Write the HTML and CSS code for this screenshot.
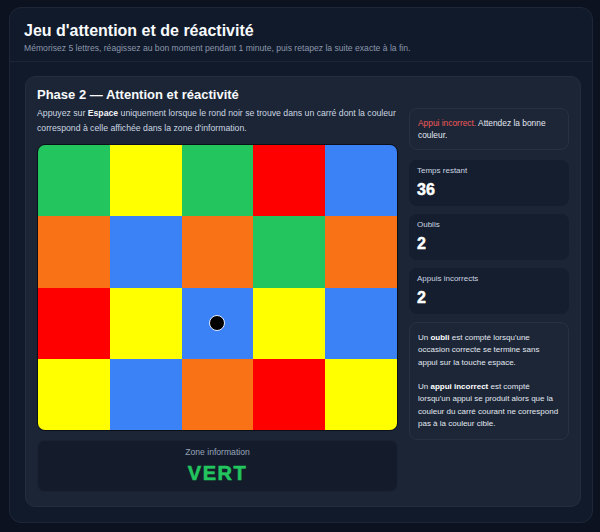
FILE: index.html
```html
<!DOCTYPE html>
<html lang="fr">
<head>
<meta charset="utf-8">
<title>Jeu d'attention et de réactivité</title>
<link rel="stylesheet" href="styles.css">
</head>
<body>
<div class="card">
  <header class="header">
    <h1 class="title">Jeu d'attention et de réactivité</h1>
    <p class="subtitle">Mémorisez 5 lettres, réagissez au bon moment pendant 1 minute, puis retapez la suite exacte à la fin.</p>
  </header>
  <main class="body">
    <section class="panel">
      <h2 class="phase">Phase 2 — Attention et réactivité</h2>
      <div class="row">
        <div class="left">
          <p class="desc">Appuyez sur <b>Espace</b> uniquement lorsque le rond noir se trouve dans un carré dont la couleur correspond à celle affichée dans la zone d'information.</p>
          <div class="grid">
            <div class="cell green"></div>
            <div class="cell yellow"></div>
            <div class="cell green"></div>
            <div class="cell red"></div>
            <div class="cell blue"></div>
            <div class="cell orange"></div>
            <div class="cell blue"></div>
            <div class="cell orange"></div>
            <div class="cell green"></div>
            <div class="cell orange"></div>
            <div class="cell red"></div>
            <div class="cell yellow"></div>
            <div class="cell blue"><span class="dot"></span></div>
            <div class="cell yellow"></div>
            <div class="cell blue"></div>
            <div class="cell yellow"></div>
            <div class="cell blue"></div>
            <div class="cell orange"></div>
            <div class="cell red"></div>
            <div class="cell yellow"></div>
          </div>
          <div class="zone">
            <div class="zone-label">Zone information</div>
            <div class="zone-value">VERT</div>
          </div>
        </div>
        <aside class="side">
          <div class="msg"><span class="err">Appui incorrect.</span> Attendez la bonne couleur.</div>
          <div class="stat">
            <div class="stat-label">Temps restant</div>
            <div class="stat-value">36</div>
          </div>
          <div class="stat">
            <div class="stat-label">Oublis</div>
            <div class="stat-value">2</div>
          </div>
          <div class="stat">
            <div class="stat-label">Appuis incorrects</div>
            <div class="stat-value">2</div>
          </div>
          <div class="info">
            <p>Un <b>oubli</b> est compté lorsqu'une occasion correcte se termine sans appui sur la touche espace.</p>
            <p>Un <b>appui incorrect</b> est compté lorsqu'un appui se produit alors que la couleur du carré courant ne correspond pas à la couleur cible.</p>
          </div>
        </aside>
      </div>
    </section>
  </main>
</div>
</body>
</html>
```

FILE: styles.css
```css
* { box-sizing: border-box; }
html, body { margin: 0; }
body {
  background: #0c1220;
  font-family: "Liberation Sans", Arial, sans-serif;
  color: #e2e8f0;
  padding: 7px 7px 9px 9px;
  height: 532px;
}
.card {
  height: 516px;
  background: #111a2b;
  border: 1px solid #1d2738;
  border-radius: 12px;
  display: flex;
  flex-direction: column;
}
.header {
  padding: 13px 14px 7px 14px;
  border-bottom: 1px solid #1b2535;
}
.title {
  margin: 0;
  font-size: 16px;
  line-height: 20px;
  font-weight: 700;
  color: #f8fafc;
}
.subtitle {
  margin: 1px 0 0;
  font-size: 8.6px;
  line-height: 12px;
  color: #8b97aa;
}
.body {
  flex: 1;
  padding: 14px 12px 15px 15px;
  display: flex;
}
.panel {
  flex: 1;
  background: #1b2535;
  border: 1px solid #222d3e;
  border-radius: 10px;
  padding: 10px 11px 12px 11px;
}
.phase {
  margin: 0;
  font-size: 13px;
  line-height: 16px;
  font-weight: 700;
  color: #f8fafc;
}
.row {
  margin-top: 3px;
  display: flex;
  gap: 11px;
}
.left {
  width: 361px;
  display: flex;
  flex-direction: column;
}
.desc {
  margin: 0;
  font-size: 8.7px;
  line-height: 15px;
  color: #cbd5e1;
}
.desc b { color: #f1f5f9; }
.grid {
  margin-top: 8px;
  width: 361px;
  display: grid;
  grid-template-columns: repeat(5, 1fr);
  grid-template-rows: repeat(4, 71.25px);
  border-radius: 8px;
  overflow: hidden;
  border: 1px solid #0b0f18;
}
.cell { position: relative; }
.green { background: #22c55e; }
.yellow { background: #ffff00; }
.red { background: #ff0000; }
.blue { background: #3b82f6; }
.orange { background: #f97316; }
.dot {
  position: absolute;
  left: 50%;
  top: 50%;
  width: 16px;
  height: 16px;
  margin: -8px 0 0 -8px;
  border-radius: 50%;
  background: #000;
  border: 1.5px solid #e6ecff;
}
.zone {
  margin-top: 9px;
  height: 52px;
  background: #141c2b;
  border: 1px solid #1a2333;
  border-radius: 8px;
  text-align: center;
  padding-top: 6px;
}
.zone-label {
  font-size: 8.6px;
  line-height: 10px;
  color: #94a3b8;
}
.zone-value {
  margin-top: 5px;
  font-size: 20px;
  line-height: 22px;
  font-weight: 700;
  letter-spacing: 1.5px;
  color: #22c55e;
  -webkit-text-stroke: 0.6px #22c55e;
}
.side {
  width: 160px;
  display: flex;
  flex-direction: column;
  gap: 8px;
  padding-top: 2px;
}
.msg {
  height: 42px;
  margin-bottom: 2px;
  border: 1px solid #273142;
  background: #1c2637;
  border-radius: 8px;
  padding: 8px 8px;
  font-size: 8.4px;
  line-height: 12px;
  color: #e2e8f0;
}
.err { color: #f05a5a; }
.stat {
  height: 46px;
  background: #151e2e;
  border-radius: 8px;
  padding: 6px 8px;
}
.stat-label {
  font-size: 8px;
  line-height: 10px;
  color: #cbd5e1;
}
.stat-value {
  margin-top: 5px;
  font-size: 16px;
  line-height: 18px;
  font-weight: 700;
  color: #ffffff;
  -webkit-text-stroke: 0.5px #ffffff;
}
.info {
  border: 1px solid #273142;
  background: #1c2637;
  border-radius: 8px;
  padding: 9px 8px 9px 8px;
  font-size: 8px;
  line-height: 12.3px;
  color: #e2e8f0;
}
.info p { margin: 0; }
.info p + p { margin-top: 12.3px; }
.info b { color: #ffffff; }
```
